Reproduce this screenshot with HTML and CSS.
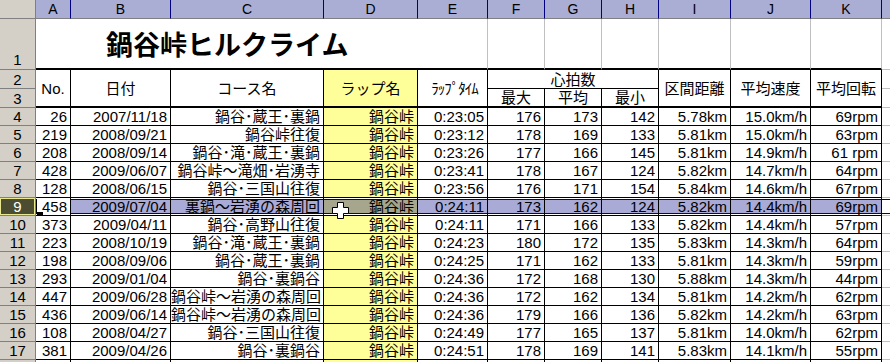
FILE: index.html
```html
<!DOCTYPE html>
<html lang="ja">
<head>
  <meta charset="UTF-8">
  <title>鍋谷峠ヒルクライム</title>
  <link rel="stylesheet" href="styles.css">
</head>
<body>
<div class="sheet">
  <table class="grid">
    <colgroup>
      <col class="w-rh"><col class="w-a"><col class="w-b"><col class="w-c"><col class="w-d"><col class="w-e">
      <col class="w-f"><col class="w-g"><col class="w-h"><col class="w-i"><col class="w-j"><col class="w-k"><col class="w-l">
    </colgroup>
    <thead>
      <tr class="colhdr">
        <th class="corner"></th>
        <th>A</th><th>B</th><th>C</th><th>D</th><th>E</th><th>F</th>
        <th>G</th><th>H</th><th>I</th><th>J</th><th>K</th><th class="last"></th>
      </tr>
    </thead>
    <tbody>
      <tr class="r1">
        <th class="rh">1</th>
        <td colspan="4" class="title">鍋谷峠ヒルクライム</td>
        <td class="blank"></td><td class="blank"></td><td class="blank"></td><td class="blank"></td>
        <td class="blank"></td><td class="blank"></td><td class="blank"></td>
        <td class="out"></td>
      </tr>
      <tr class="r2">
        <th class="rh">2</th>
        <td rowspan="2" class="hd">No.</td>
        <td rowspan="2" class="hd">日付</td>
        <td rowspan="2" class="hd">コース名</td>
        <td rowspan="2" class="hd lap">ラップ名</td>
        <td rowspan="2" class="hd half">ﾗｯﾌﾟﾀｲﾑ</td>
        <td colspan="3" class="hd hr">心拍数</td>
        <td rowspan="2" class="hd">区間距離</td>
        <td rowspan="2" class="hd">平均速度</td>
        <td rowspan="2" class="hd">平均回転</td>
        <td class="out"></td>
      </tr>
      <tr class="r3">
        <th class="rh">3</th>
        <td class="hd">最大</td><td class="hd">平均</td><td class="hd">最小</td>
        <td class="out"></td>
      </tr>
      <tr class="row"><th class="rh">4</th><td>26</td><td>2007/11/18</td><td>鍋谷･蔵王･裏鍋</td><td class="lap">鍋谷峠</td><td>0:23:05</td><td>176</td><td>173</td><td>142</td><td>5.78km</td><td>15.0km/h</td><td>69rpm</td><td class="out"></td></tr>
      <tr class="row"><th class="rh">5</th><td>219</td><td>2008/09/21</td><td>鍋谷峠往復</td><td class="lap">鍋谷峠</td><td>0:23:12</td><td>178</td><td>169</td><td>133</td><td>5.81km</td><td>15.0km/h</td><td>63rpm</td><td class="out"></td></tr>
      <tr class="row"><th class="rh">6</th><td>208</td><td>2008/09/14</td><td>鍋谷･滝･蔵王･裏鍋</td><td class="lap">鍋谷峠</td><td>0:23:26</td><td>177</td><td>166</td><td>145</td><td>5.81km</td><td>14.9km/h</td><td>61 rpm</td><td class="out"></td></tr>
      <tr class="row"><th class="rh">7</th><td>428</td><td>2009/06/07</td><td>鍋谷峠～滝畑･岩湧寺</td><td class="lap">鍋谷峠</td><td>0:23:41</td><td>178</td><td>167</td><td>124</td><td>5.82km</td><td>14.7km/h</td><td>64rpm</td><td class="out"></td></tr>
      <tr class="row"><th class="rh">8</th><td>128</td><td>2008/06/15</td><td>鍋谷･三国山往復</td><td class="lap">鍋谷峠</td><td>0:23:56</td><td>176</td><td>171</td><td>154</td><td>5.84km</td><td>14.6km/h</td><td>67rpm</td><td class="out"></td></tr>
      <tr class="row sel"><th class="rh">9</th><td class="active">458</td><td>2009/07/04</td><td>裏鍋～岩湧の森周回</td><td class="lap">鍋谷峠</td><td>0:24:11</td><td>173</td><td>162</td><td>124</td><td>5.82km</td><td>14.4km/h</td><td>69rpm</td><td class="out"></td></tr>
      <tr class="row"><th class="rh">10</th><td>373</td><td>2009/04/11</td><td>鍋谷･高野山往復</td><td class="lap">鍋谷峠</td><td>0:24:11</td><td>171</td><td>166</td><td>133</td><td>5.82km</td><td>14.4km/h</td><td>57rpm</td><td class="out"></td></tr>
      <tr class="row"><th class="rh">11</th><td>223</td><td>2008/10/19</td><td>鍋谷･滝･蔵王･裏鍋</td><td class="lap">鍋谷峠</td><td>0:24:23</td><td>180</td><td>172</td><td>135</td><td>5.83km</td><td>14.3km/h</td><td>64rpm</td><td class="out"></td></tr>
      <tr class="row"><th class="rh">12</th><td>198</td><td>2008/09/06</td><td>鍋谷･蔵王･裏鍋</td><td class="lap">鍋谷峠</td><td>0:24:25</td><td>171</td><td>162</td><td>133</td><td>5.81km</td><td>14.3km/h</td><td>59rpm</td><td class="out"></td></tr>
      <tr class="row"><th class="rh">13</th><td>293</td><td>2009/01/04</td><td>鍋谷･裏鍋谷</td><td class="lap">鍋谷峠</td><td>0:24:36</td><td>172</td><td>168</td><td>130</td><td>5.88km</td><td>14.3km/h</td><td>44rpm</td><td class="out"></td></tr>
      <tr class="row"><th class="rh">14</th><td>447</td><td>2009/06/28</td><td>鍋谷峠～岩湧の森周回</td><td class="lap">鍋谷峠</td><td>0:24:36</td><td>172</td><td>162</td><td>134</td><td>5.81km</td><td>14.2km/h</td><td>62rpm</td><td class="out"></td></tr>
      <tr class="row"><th class="rh">15</th><td>436</td><td>2009/06/14</td><td>鍋谷峠～岩湧の森周回</td><td class="lap">鍋谷峠</td><td>0:24:36</td><td>179</td><td>166</td><td>136</td><td>5.82km</td><td>14.2km/h</td><td>63rpm</td><td class="out"></td></tr>
      <tr class="row"><th class="rh">16</th><td>108</td><td>2008/04/27</td><td>鍋谷･三国山往復</td><td class="lap">鍋谷峠</td><td>0:24:49</td><td>177</td><td>165</td><td>137</td><td>5.81km</td><td>14.0km/h</td><td>62rpm</td><td class="out"></td></tr>
      <tr class="row"><th class="rh">17</th><td>381</td><td>2009/04/26</td><td>鍋谷･裏鍋谷</td><td class="lap">鍋谷峠</td><td>0:24:51</td><td>178</td><td>169</td><td>141</td><td>5.83km</td><td>14.1km/h</td><td>55rpm</td><td class="out"></td></tr>
      <tr class="row"><th class="rh"></th><td></td><td></td><td></td><td class="lap"></td><td></td><td></td><td></td><td></td><td></td><td></td><td></td><td class="out"></td></tr>
    </tbody>
  </table>

  <!-- fill handle of the active cell -->
  <div class="handle"></div>

  <!-- mouse cursor (white cross) -->
  <svg class="cursor" width="17" height="17" viewBox="0 0 17 17">
    <path d="M5.5 0.5h6v5h5v6h-5v5h-6v-5h-5v-6h5z" fill="#fff" stroke="#000"/>
  </svg>
</div>
</body>
</html>
```

FILE: styles.css
```css
body {
  margin: 0;
  background: #fff;
  font-family: "Liberation Sans", "Noto Sans CJK JP", sans-serif;
  font-size: 15px;
  color: #000;
  overflow: hidden;
}

.sheet {
  position: relative;
  width: 890px;
  height: 362px;
  overflow: hidden;
}

.grid {
  border-collapse: separate;
  border-spacing: 0;
  table-layout: fixed;
  width: 982px;
}
.grid td,
.grid th {
  padding: 0;
  font-weight: normal;
  white-space: nowrap;
  overflow: hidden;
  line-height: 15px;
}

/* column widths (border included) */
.w-rh { width: 36px; }
.w-a { width: 35px; }
.w-b { width: 100px; }
.w-c { width: 153px; }
.w-d { width: 94px; }
.w-e { width: 70px; }
.w-f { width: 57px; }
.w-g { width: 57px; }
.w-h { width: 57px; }
.w-i { width: 72px; }
.w-j { width: 80px; }
.w-k { width: 71px; }
.w-l { width: 100px; }

/* column header */
.colhdr { height: 19px; }
.grid .colhdr th {
  background: #aaaed4;
  border-right: 1px solid #000080;
  border-bottom: 1px solid #808080;
  text-align: center;
  font-size: 14px;
}
.grid .colhdr .corner {
  background: #d4d0c8;
  border-right: 1px solid #808080;
}

/* row header */
.grid .rh {
  background: #d4d0c8;
  border-right: 1px solid #808080;
  border-bottom: 1px solid #808080;
  text-align: center;
  font-size: 15px;
}

/* row 1 : title */
.r1 { height: 51px; }
.grid .r1 .rh { vertical-align: bottom; padding-bottom: 2px; }
.grid td.title {
  padding: 4px 0 0 70px;
  font-size: 27px;
  font-weight: bold;
  line-height: 30px;
  border-bottom: 2px solid #000;
}
.blank {
  border-right: 1px solid #c0c0c0;
  border-bottom: 2px solid #000;
}

/* rows 2-3 : headings */
.r2, .r3 { height: 19px; }
.hd {
  text-align: center;
  border-right: 1px solid #000;
  border-bottom: 2px solid #000;
}
.hd.hr { border-bottom: 1px solid #000; }
.hd.half { letter-spacing: -1px; padding-left: 4px; }
.lap { background: #ffff99; }

/* data rows */
.row { height: 18px; }
.row td {
  text-align: right;
  padding-right: 3px;
  border-right: 1px solid #000;
  border-bottom: 1px solid #000;
}

.grid .row td.out,
.grid .r1 td.out,
.grid .r2 td.out,
.grid .r3 td.out {
  border-right: 0;
  border-bottom: 1px solid #c0c0c0;
  background: #fff;
}

/* selected row 9 */
.sel td {
  background: #a9abd6;
  box-shadow: inset 0 1px 0 #fff, inset 0 2px 0 #000080, inset 0 -1px 0 #fff, inset 0 -2px 0 #000080;
}
.sel td.lap { background: #a6a68c; }
.sel td.active {
  background: #fff;
  box-shadow: inset 0 1px 0 #fff, inset 0 -1px 0 #fff, inset 1px 0 0 #000;
}
.grid .sel .rh {
  background: #4c4c30;
  color: #fff;
  box-shadow: inset 0 0 0 1px #e8e890;
}

.handle {
  position: absolute;
  left: 37px;
  top: 212px;
  width: 6px;
  height: 4px;
  background: #000;
}

.cursor {
  position: absolute;
  left: 332px;
  top: 202px;
}
```
